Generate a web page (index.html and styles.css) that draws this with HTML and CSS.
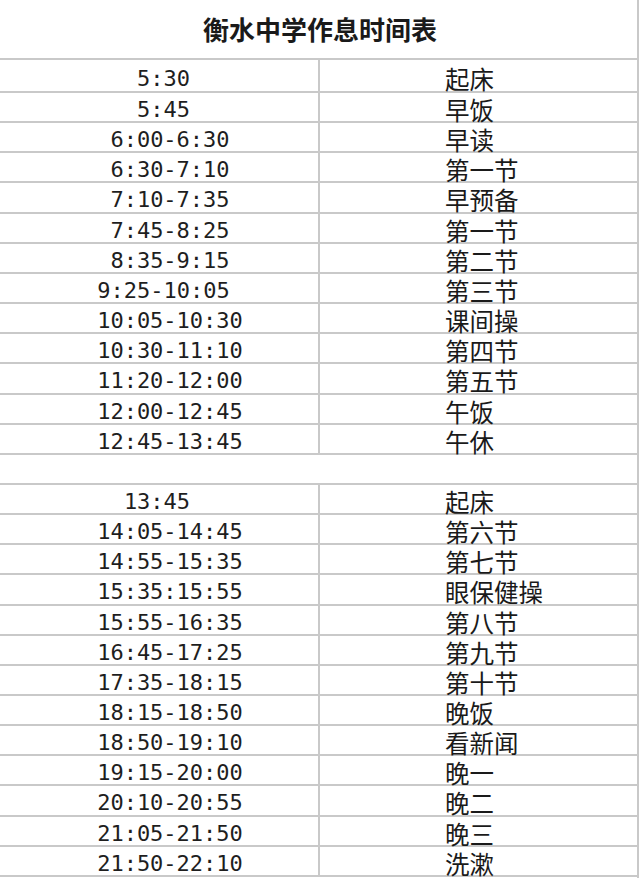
FILE: index.html
```html
<!DOCTYPE html>
<html lang="zh-CN">
<head>
<meta charset="utf-8">
<title>衡水中学作息时间表</title>
<link rel="stylesheet" href="styles.css">
</head>
<body>
<main class="sheet">
  <h1 class="title">衡水中学作息时间表</h1>
  <div class="table">
    <div class="row row-first"><span class="time pad1">5:30</span><span class="act">起床</span></div>
    <div class="row"><span class="time pad1">5:45</span><span class="act">早饭</span></div>
    <div class="row"><span class="time">6:00-6:30</span><span class="act">早读</span></div>
    <div class="row"><span class="time">6:30-7:10</span><span class="act">第一节</span></div>
    <div class="row"><span class="time">7:10-7:35</span><span class="act">早预备</span></div>
    <div class="row"><span class="time">7:45-8:25</span><span class="act">第一节</span></div>
    <div class="row"><span class="time">8:35-9:15</span><span class="act">第二节</span></div>
    <div class="row"><span class="time pad1">9:25-10:05</span><span class="act">第三节</span></div>
    <div class="row"><span class="time">10:05-10:30</span><span class="act">课间操</span></div>
    <div class="row"><span class="time">10:30-11:10</span><span class="act">第四节</span></div>
    <div class="row"><span class="time">11:20-12:00</span><span class="act">第五节</span></div>
    <div class="row"><span class="time">12:00-12:45</span><span class="act">午饭</span></div>
    <div class="row"><span class="time">12:45-13:45</span><span class="act">午休</span></div>
  </div>
  <div class="table table-second">
    <div class="row"><span class="time pad2">13:45</span><span class="act">起床</span></div>
    <div class="row"><span class="time">14:05-14:45</span><span class="act">第六节</span></div>
    <div class="row"><span class="time">14:55-15:35</span><span class="act">第七节</span></div>
    <div class="row"><span class="time">15:35:15:55</span><span class="act">眼保健操</span></div>
    <div class="row"><span class="time">15:55-16:35</span><span class="act">第八节</span></div>
    <div class="row"><span class="time">16:45-17:25</span><span class="act">第九节</span></div>
    <div class="row"><span class="time">17:35-18:15</span><span class="act">第十节</span></div>
    <div class="row"><span class="time">18:15-18:50</span><span class="act">晚饭</span></div>
    <div class="row"><span class="time">18:50-19:10</span><span class="act">看新闻</span></div>
    <div class="row"><span class="time">19:15-20:00</span><span class="act">晚一</span></div>
    <div class="row"><span class="time">20:10-20:55</span><span class="act">晚二</span></div>
    <div class="row"><span class="time">21:05-21:50</span><span class="act">晚三</span></div>
    <div class="row"><span class="time">21:50-22:10</span><span class="act">洗漱</span></div>
  </div>
</main>
</body>
</html>
```

FILE: styles.css
```css
html, body {
  margin: 0;
  padding: 0;
  background: #ffffff;
}

.sheet {
  width: 639px;
  height: 878px;
  box-sizing: border-box;
  border-right: 2px solid #c9c9c9;
  overflow: hidden;
  background: #ffffff;
  color: #1c1c1c;
}

.title {
  margin: 0;
  height: 58px;
  padding-left: 3px;
  text-align: center;
  font-family: "Noto Sans CJK SC", sans-serif;
  font-weight: 700;
  font-size: 26px;
  line-height: 58px;
  color: #1a1a1a;
}

.table {
  border-top: 2px solid #c9c9c9;
}

.table-second {
  margin-top: 28px;
}

.row {
  display: grid;
  grid-template-columns: 320px 1fr;
  height: 30.17px;
  box-sizing: border-box;
  border-bottom: 2px solid #c9c9c9;
}

.row-first {
  height: 33px;
}

.row-first .time,
.row-first .act {
  padding-top: 6px;
}

.time,
.act {
  display: block;
  padding-top: 4px;
  line-height: 25px;
  white-space: nowrap;
}

.time {
  border-right: 2px solid #c9c9c9;
  padding-left: 22px;
  text-align: center;
  font-family: "DejaVu Sans Mono", "Liberation Mono", monospace;
  font-size: 22px;
  color: #1e1e1e;
}

.pad1 {
  padding-right: 13px;
}

.pad2 {
  padding-right: 26px;
}

.act {
  padding-left: 125px;
  font-family: "Noto Sans CJK SC", sans-serif;
  font-size: 24.5px;
  color: #1a1a1a;
}
```
